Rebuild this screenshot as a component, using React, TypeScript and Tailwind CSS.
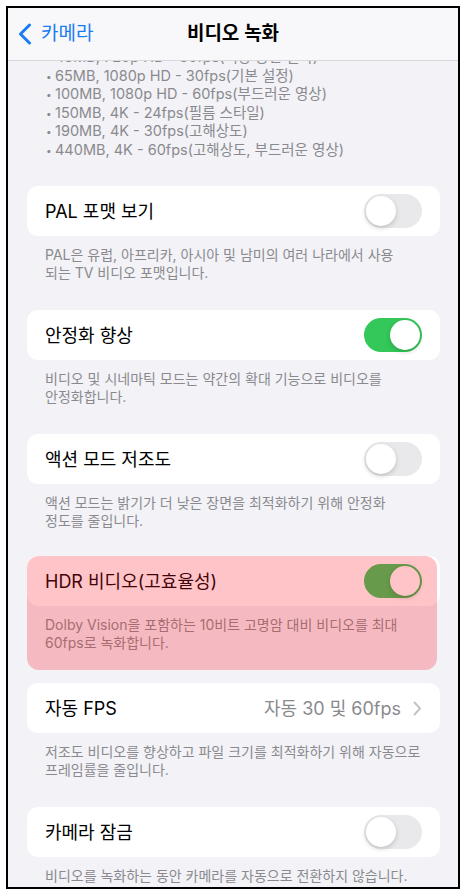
import React from "react";

const font = { fontFamily: 'Inter, "Noto Sans CJK KR", sans-serif' };

function Toggle({ on }: { on: boolean }) {
  return (
    <div
      className={`relative h-[34px] w-[58px] shrink-0 rounded-full ${
        on ? "bg-[#34c759]" : "bg-[#e9e9eb]"
      }`}
    >
      <div
        className={`absolute top-[2px] h-[30px] w-[30px] rounded-full bg-white shadow-[0_2px_5px_rgba(0,0,0,0.18)] ${
          on ? "right-[2px]" : "left-[2px]"
        }`}
      />
    </div>
  );
}

function Section({
  label,
  footer,
  on,
  value,
  last,
}: {
  label: string;
  footer: string[];
  on?: boolean;
  value?: string;
  last?: boolean;
}) {
  return (
    <div className={last ? "" : "mb-[28px]"}>
      <div className="flex h-[50px] items-center justify-between rounded-[11px] bg-white pl-[18px] pr-[18px]">
        <span className="text-[18px] text-black">{label}</span>
        {value ? (
          <div className="flex items-center gap-[12px] text-[#8a8a8e]">
            <span className="text-[18px]">{value}</span>
            <svg width="9" height="15" viewBox="0 0 9 15" fill="none">
              <path d="M1.5 1.5L7 7.5L1.5 13.5" stroke="#c4c4c8" strokeWidth="2" strokeLinecap="round" strokeLinejoin="round" />
            </svg>
          </div>
        ) : (
          <Toggle on={!!on} />
        )}
      </div>
      <div className="pl-[18px] pt-[10px] text-[14px] leading-[18px] text-[#8a8a8e]">
        {footer.map((l) => (
          <div key={l} className="whitespace-nowrap">
            {l}
          </div>
        ))}
      </div>
    </div>
  );
}

export default function App() {
  const formats = [
    "45MB, 720p HD - 30fps(저장 공간 절약)",
    "65MB, 1080p HD - 30fps(기본 설정)",
    "100MB, 1080p HD - 60fps(부드러운 영상)",
    "150MB, 4K - 24fps(필름 스타일)",
    "190MB, 4K - 30fps(고해상도)",
    "440MB, 4K - 60fps(고해상도, 부드러운 영상)",
  ];

  return (
    <div className="h-[895px] w-[466px] bg-white p-[6px]" style={font}>
      <div className="flex h-full flex-col overflow-hidden border-2 border-black bg-[#f2f2f7]">
        <div className="relative z-10 flex h-[53px] shrink-0 items-center border-b border-[#d8d8dc] bg-[#f8f8fa]">
          <div className="flex items-center pl-[10px] text-[#1a7cf5]">
            <svg width="14" height="22" viewBox="0 0 14 22" fill="none">
              <path d="M11.5 2L2.5 11L11.5 20" stroke="#1a7cf5" strokeWidth="3" strokeLinecap="round" strokeLinejoin="round" />
            </svg>
            <span className="ml-[9px] text-[19px]">카메라</span>
          </div>
          <div className="pointer-events-none absolute inset-x-0 text-center text-[19px] font-semibold text-black">
            비디오 녹화
          </div>
        </div>

        <div className="flex-1 overflow-hidden">
          <div className="-mt-[13px] pl-[38px] text-[14.5px] leading-[18.5px] text-[#8a8a8e]">
            {formats.map((f) => (
              <div key={f} className="flex items-center">
                <span className="w-[9px] text-[10px]">•</span>
                <span>{f}</span>
              </div>
            ))}
          </div>

          <div className="mt-[27px] pl-[19px] pr-[18px]">
            <Section
              label="PAL 포맷 보기"
              footer={["PAL은 유럽, 아프리카, 아시아 및 남미의 여러 나라에서 사용", "되는 TV 비디오 포맷입니다."]}
            />
            <Section
              label="안정화 향상"
              on
              footer={["비디오 및 시네마틱 모드는 약간의 확대 기능으로 비디오를", "안정화합니다."]}
            />
            <Section
              label="액션 모드 저조도"
              footer={["액션 모드는 밝기가 더 낮은 장면을 최적화하기 위해 안정화", "정도를 줄입니다."]}
            />
            <div className="relative -mt-[2px] mb-[13px] pb-[18px]">
              <Section
                label="HDR 비디오(고효율성)"
                on
                last
                footer={["Dolby Vision을 포함하는 10비트 고명암 대비 비디오를 최대", "60fps로 녹화합니다."]}
              />
              <div className="pointer-events-none absolute inset-y-0 left-0 right-[3px] rounded-[12px] bg-[rgba(255,20,30,0.25)]" />
            </div>
            <Section
              label="자동 FPS"
              value="자동 30 및 60fps"
              footer={["저조도 비디오를 향상하고 파일 크기를 최적화하기 위해 자동으로", "프레임률을 줄입니다."]}
            />
            <Section
              label="카메라 잠금"
              last
              footer={["비디오를 녹화하는 동안 카메라를 자동으로 전환하지 않습니다."]}
            />
          </div>
        </div>
      </div>
    </div>
  );
}
